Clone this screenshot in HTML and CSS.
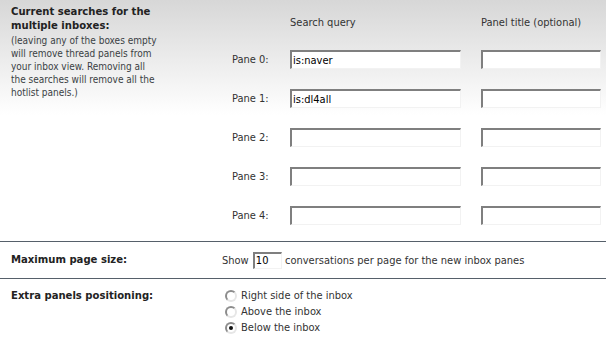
FILE: index.html
```html
<!DOCTYPE html>
<html lang="en">
<head>
    <meta charset="UTF-8">
    <title>Multiple inboxes settings</title>
    <link rel="stylesheet" href="styles.css">
</head>
<body>
    <div class="settings">
        <div class="section section-panes">
            <div class="label-col">
                <h3>Current searches for the multiple inboxes:</h3>
                <p>(leaving any of the boxes empty will remove thread panels from your inbox view. Removing all the searches will remove all the hotlist panels.)</p>
            </div>
            <div class="panes">
                <span></span>
                <span class="col-head">Search query</span>
                <span class="col-head">Panel title (optional)</span>

                <label class="pane-label">Pane 0:</label>
                <input class="text-input query" type="text" value="is:naver">
                <input class="text-input title" type="text">

                <label class="pane-label">Pane 1:</label>
                <input class="text-input query" type="text" value="is:dl4all">
                <input class="text-input title" type="text">

                <label class="pane-label">Pane 2:</label>
                <input class="text-input query" type="text">
                <input class="text-input title" type="text">

                <label class="pane-label">Pane 3:</label>
                <input class="text-input query" type="text">
                <input class="text-input title" type="text">

                <label class="pane-label">Pane 4:</label>
                <input class="text-input query" type="text">
                <input class="text-input title" type="text">
            </div>
        </div>

        <div class="section section-size">
            <div class="label-col">
                <h3>Maximum page size:</h3>
            </div>
            <div class="value-col">
                Show <input class="text-input page-size" type="text" value="10"> conversations per page for the new inbox panes
            </div>
        </div>

        <div class="section section-position">
            <div class="label-col">
                <h3>Extra panels positioning:</h3>
            </div>
            <div class="value-col radios">
                <label><input type="radio" name="pos"> Right side of the inbox</label>
                <label><input type="radio" name="pos"> Above the inbox</label>
                <label><input type="radio" name="pos" checked> Below the inbox</label>
            </div>
        </div>
    </div>
</body>
</html>
```

FILE: styles.css
```css
* {
    margin: 0;
    padding: 0;
    box-sizing: border-box;
}

body {
    background: #fff;
    font-family: "DejaVu Sans Condensed", "Liberation Sans", sans-serif;
    font-size: 11px;
    line-height: 13px;
    color: #333;
}

.section {
    display: flex;
    border-bottom: 1px solid #56606a;
}

.section-position {
    border-bottom: none;
}

.section-panes {
    background: linear-gradient(to bottom, #d7d7d7 0, #fff 115px);
    padding-bottom: 16px;
}

.label-col {
    width: 222px;
    flex: none;
    padding-left: 11px;
}

.label-col h3 {
    font-size: 11.2px;
    line-height: 14px;
    font-weight: bold;
    color: #222;
}

.section-panes .label-col {
    padding-top: 5px;
}

.section-panes .label-col h3 {
    width: 160px;
}

.label-col p {
    width: 148px;
    font-size: 10px;
    line-height: 13px;
    color: #3a3f44;
    margin-top: 1px;
}

.panes {
    display: grid;
    grid-template-columns: 38px 171px 120px;
    column-gap: 20px;
    row-gap: 20px;
    padding-top: 16px;
    padding-left: 10px;
    align-items: center;
}

.col-head {
    height: 14px;
}

.pane-label {
    color: #333;
}

.text-input {
    height: 19px;
    font: inherit;
    color: #000;
    background: #fff;
    border-top: 2px solid #7f7f7f;
    border-left: 2px solid #7f7f7f;
    border-right: 1px solid #f2f2f2;
    border-bottom: 1px solid #f2f2f2;
    padding: 0 1px;
    outline: none;
}

.section-size {
    height: 37px;
    align-items: center;
}

.page-size {
    width: 29px;
    height: 17px;
    margin: 0 0 0 1px;
    vertical-align: middle;
}

.section-position {
    padding-top: 10px;
}

.radios {
    display: flex;
    flex-direction: column;
    gap: 3px;
    padding-left: 3px;
}

.radios label {
    display: flex;
    align-items: center;
    gap: 4px;
}

.radios input {
    appearance: none;
    width: 12px;
    height: 12px;
    border-radius: 50%;
    border: 2px solid;
    border-color: #8c8c8c #e6e6e6 #e6e6e6 #8c8c8c;
    background: #fff;
    position: relative;
}

.radios input:checked::after {
    content: "";
    position: absolute;
    left: 2px;
    top: 2px;
    width: 4px;
    height: 4px;
    border-radius: 50%;
    background: #111;
}
```
